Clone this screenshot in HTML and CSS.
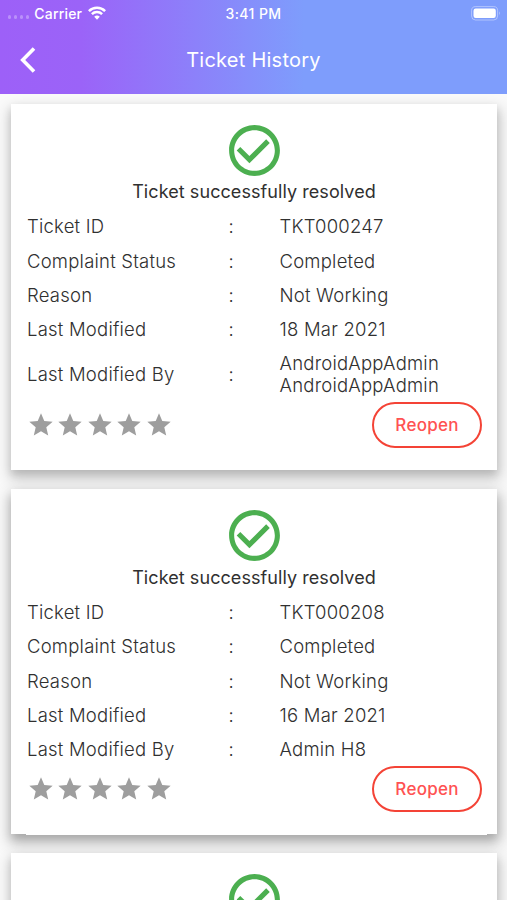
FILE: index.html
```html
<!DOCTYPE html>
<html lang="en">
<head>
<meta charset="utf-8">
<title>Ticket History</title>
<link rel="stylesheet" href="styles.css">
</head>
<body>
<svg class="defs" aria-hidden="true">
  <symbol id="check" viewBox="0 0 24 24"><path d="M16.59 7.58 10 14.17l-3.59-3.58L5 12l5 5 8-8zM12 2C6.48 2 2 6.48 2 12s4.48 10 10 10 10-4.48 10-10S17.52 2 12 2zm0 18c-4.42 0-8-3.58-8-8s3.58-8 8-8 8 3.58 8 8-3.58 8-8 8z"/></symbol>
  <symbol id="star" viewBox="0 0 24 24"><path d="M12 17.27 18.18 21l-1.64-7.03L22 9.24l-7.19-.61L12 2 9.19 8.63 2 9.24l5.46 4.73L5.82 21z"/></symbol>
</svg>
<header class="header">
  <div class="status">
    <div class="carrier">
      <span class="dots"><i></i><i></i><i></i><i></i></span>
      <span class="carrier-name">Carrier</span>
      <svg class="wifi" viewBox="0 0 18 14" fill="none" stroke="#fff" stroke-width="2.5"><path d="M.9 5.1a11.5 11.5 0 0 1 16.2 0M3.9 8.2a7.2 7.2 0 0 1 10.2 0"/><path d="M9 13.7 6.2 10.8a4 4 0 0 1 5.6 0z" fill="#fff" stroke="none"/></svg>
    </div>
    <span class="time">3:41 PM</span>
    <svg class="battery" viewBox="0 0 30 15"><rect x=".6" y=".6" width="26" height="13.4" rx="4" fill="none" stroke="#fff" stroke-opacity=".4"/><rect x="2.5" y="2.5" width="22.3" height="9.5" rx="2.2" fill="#fff"/><path d="M28 5.2q1.8 2 0 4.2z" fill="#fff" fill-opacity=".5"/></svg>
  </div>
  <div class="appbar">
    <svg class="back" viewBox="0 0 16 26" fill="none" stroke="#fff" stroke-width="3.6"><path d="M14 1.6 2.7 13 14 24.4"/></svg>
    <h1 class="title">Ticket History</h1>
  </div>
</header>
<main class="list">
  <section class="card">
    <svg class="check"><use href="#check"/></svg>
    <h2 class="message">Ticket successfully resolved</h2>
    <dl class="row"><dt>Ticket ID</dt><dd class="colon">:</dd><dd>TKT000247</dd></dl>
    <dl class="row"><dt>Complaint Status</dt><dd class="colon">:</dd><dd>Completed</dd></dl>
    <dl class="row"><dt>Reason</dt><dd class="colon">:</dd><dd>Not Working</dd></dl>
    <dl class="row"><dt>Last Modified</dt><dd class="colon">:</dd><dd>18 Mar 2021</dd></dl>
    <dl class="row"><dt>Last Modified By</dt><dd class="colon">:</dd><dd>AndroidAppAdmin AndroidAppAdmin</dd></dl>
    <div class="actions">
      <div class="stars"><svg><use href="#star"/></svg><svg><use href="#star"/></svg><svg><use href="#star"/></svg><svg><use href="#star"/></svg><svg><use href="#star"/></svg></div>
      <button class="reopen">Reopen</button>
    </div>
  </section>
  <section class="card card-deep">
    <svg class="check"><use href="#check"/></svg>
    <h2 class="message">Ticket successfully resolved</h2>
    <dl class="row"><dt>Ticket ID</dt><dd class="colon">:</dd><dd>TKT000208</dd></dl>
    <dl class="row"><dt>Complaint Status</dt><dd class="colon">:</dd><dd>Completed</dd></dl>
    <dl class="row"><dt>Reason</dt><dd class="colon">:</dd><dd>Not Working</dd></dl>
    <dl class="row"><dt>Last Modified</dt><dd class="colon">:</dd><dd>16 Mar 2021</dd></dl>
    <dl class="row"><dt>Last Modified By</dt><dd class="colon">:</dd><dd>Admin H8</dd></dl>
    <div class="actions">
      <div class="stars"><svg><use href="#star"/></svg><svg><use href="#star"/></svg><svg><use href="#star"/></svg><svg><use href="#star"/></svg><svg><use href="#star"/></svg></div>
      <button class="reopen">Reopen</button>
    </div>
  </section>
  <section class="card">
    <svg class="check"><use href="#check"/></svg>
  </section>
</main>
</body>
</html>
```

FILE: styles.css
```css
* { box-sizing: border-box; }
body {
  margin: 0;
  height: 900px;
  overflow: hidden;
  display: flex;
  flex-direction: column;
  background: #fafafa;
  font-family: Inter, "Liberation Sans", sans-serif;
  color: #303030;
}
h1, h2, dl, dt, dd { margin: 0; }
svg { display: block; flex: none; }
.defs { width: 0; height: 0; position: absolute; }

.header {
  flex: none;
  height: 93.5px;
  color: #fff;
  background: linear-gradient(90deg, #9d60f8 0, #9b63f8 16%, #7e9dfc 60%, #7e9dfc 100%);
}
.status, .appbar {
  display: grid;
  grid-template-columns: 1fr auto 1fr;
  align-items: center;
}
.status { height: 26px; padding: 0 8px; font-size: 14px; font-weight: 500; }
.carrier { display: flex; align-items: center; }
.dots { display: flex; gap: 2.6px; margin-top: 8px; }
.dots i { width: 3.4px; height: 3.4px; border-radius: 50%; background: #fff; opacity: .3; }
.carrier-name { margin-left: 5px; letter-spacing: .18px; }
.wifi { width: 18px; height: 14px; margin-left: 6px; }
.time { font-size: 14px; letter-spacing: .4px; }
.battery { width: 30px; height: 15px; justify-self: end; margin-right: -2px; }
.appbar { height: 67px; padding: 0 20px; }
.back { width: 16px; height: 26px; }
.title { grid-column: 2; font-size: 20px; font-weight: 400; letter-spacing: .25px; }

.list {
  height: 806.5px;
  overflow: hidden;
  padding: 10px 10px 0 10.5px;
  display: flex;
  flex-direction: column;
  gap: 19.4px;
}
.card {
  position: relative;
  flex: none;
  padding: 16px 15px 21.7px 16.5px;
  background: #fff;
  box-shadow: 0 5px 8px rgba(0, 0, 0, .14), 1px 7px 14px 3px rgba(0, 0, 0, .16);
}
.card-deep { box-shadow: 0 6px 9px rgba(0, 0, 0, .18), 1px 7px 15px 3px rgba(0, 0, 0, .2); }
.card-deep::after {
  content: "";
  position: absolute;
  left: 15.5px;
  right: 10px;
  bottom: -1.5px;
  height: 2px;
  background: #fff;
}
.check { width: 61px; height: 61px; margin: 0 auto; fill: #4caf50; }
.message {
  margin: .5px 1px 6.3px 0;
  text-align: center;
  font-size: 18px;
  font-weight: 400;
  line-height: 22px;
  letter-spacing: .07px;
}
.row {
  display: grid;
  grid-template-columns: 201.5px 51px 1fr;
  align-items: center;
  padding: 6.1px 0;
  font-size: 18.5px;
  font-weight: 300;
  line-height: 22px;
  letter-spacing: .22px;
}
.row dd:last-child { width: 165px; }
.actions { display: flex; justify-content: space-between; align-items: center; }
.stars { display: flex; gap: 1.4px; }
.stars svg { width: 28px; height: 28px; fill: #9e9e9e; }
.reopen {
  width: 110px;
  height: 46px;
  padding: 0;
  border: 2px solid #f44336;
  border-radius: 23px;
  background: none;
  color: #ff5252;
  font: 500 17px Inter, sans-serif;
  letter-spacing: .25px;
}
```
